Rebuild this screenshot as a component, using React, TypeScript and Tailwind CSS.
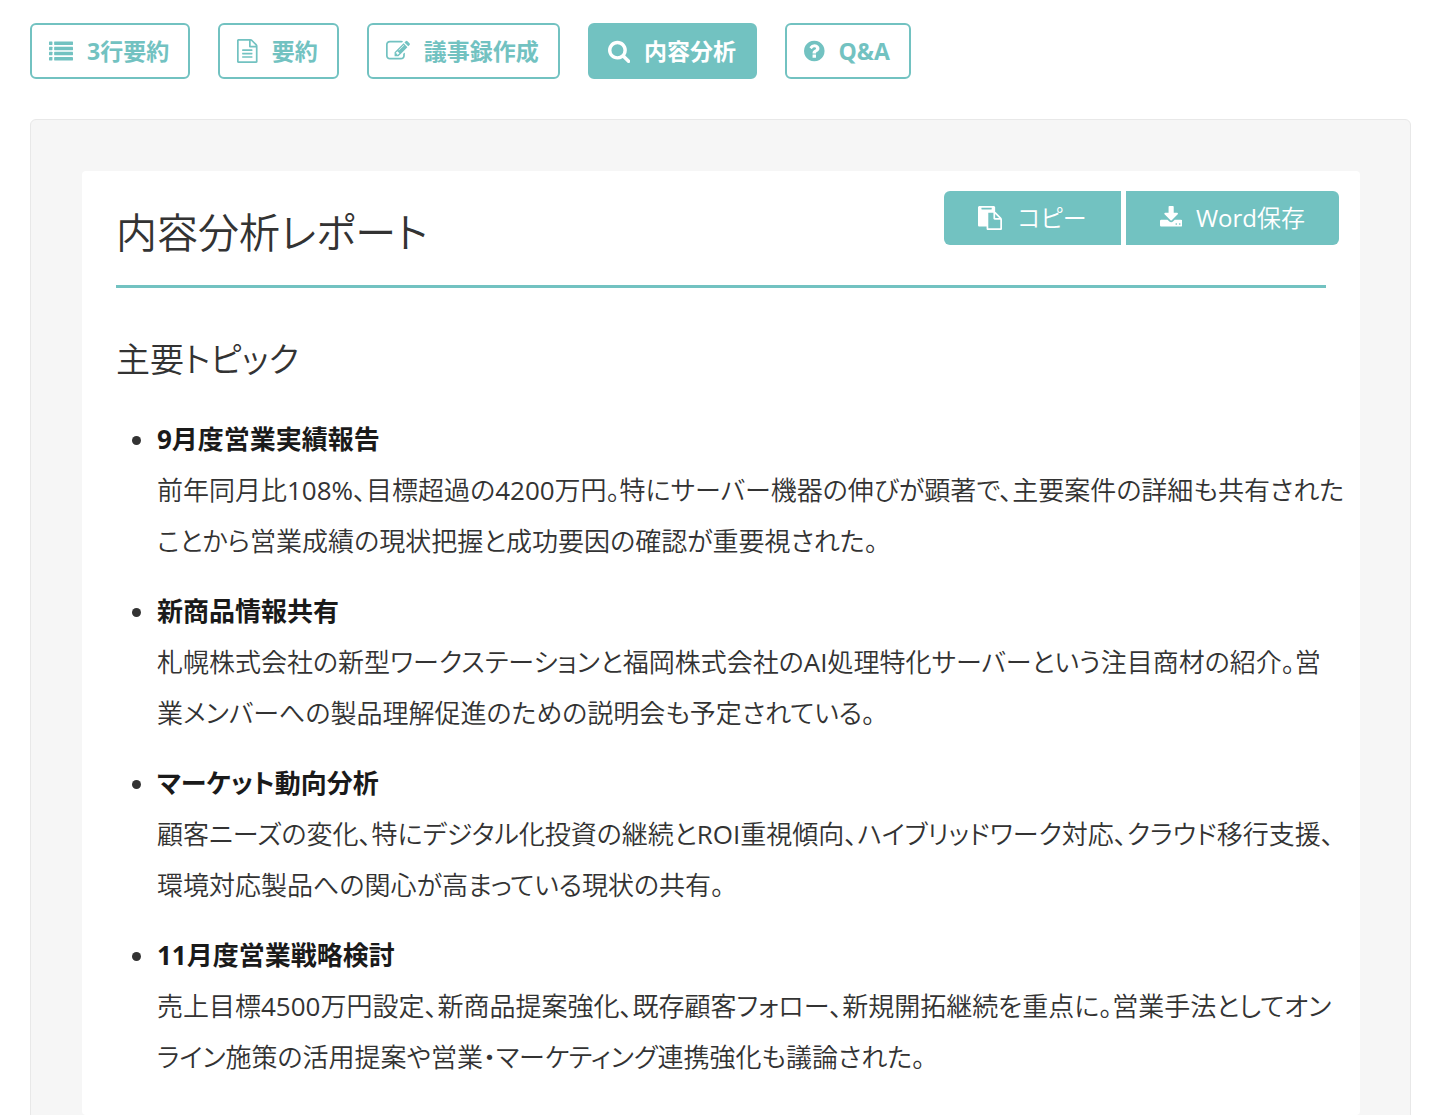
import type { ReactNode } from "react";

type IconProps = { left?: number; width?: number; children: ReactNode };

/* 1792-unit glyph grid drawn at 24px tall; narrower glyphs crop the sides. */
function Glyph({ left = 0, width = 1792, children }: IconProps) {
  return (
    <svg
      aria-hidden="true"
      viewBox={`${left} 0 ${width} 1792`}
      className="h-6 w-auto shrink-0"
      fill="currentColor"
    >
      {children}
    </svg>
  );
}

const listRows = [192, 576, 960, 1344];

const ListIcon = () => (
  <Glyph>
    {listRows.map((y) => (
      <g key={y}>
        <rect x="0" y={y} width="256" height="256" rx="32" />
        <rect x="384" y={y} width="1408" height="256" rx="32" />
      </g>
    ))}
  </Glyph>
);

const FileIcon = () => (
  <Glyph left={128} width={1536}>
    <path d="M1596 380q28 28 48 76t20 88v1152q0 40-28 68t-68 28h-1344q-40 0-68-28t-28-68v-1600q0-40 28-68t68-28h896q40 0 88 20t76 48zm-444-244v376h376q-10-29-22-41l-313-313q-12-12-41-22zm384 1528v-1024h-416q-40 0-68-28t-28-68v-416h-768v1536h1280zm-1024-864q0-14 9-23t23-9h704q14 0 23 9t9 23v64q0 14-9 23t-23 9h-704q-14 0-23-9t-9-23v-64zm736 224q14 0 23 9t9 23v64q0 14-9 23t-23 9h-704q-14 0-23-9t-9-23v-64q0-14 9-23t23-9h704zm0 256q14 0 23 9t9 23v64q0 14-9 23t-23 9h-704q-14 0-23-9t-9-23v-64q0-14 9-23t23-9h704z" />
  </Glyph>
);

const EditIcon = () => (
  <Glyph>
    <path d="M888 1184l116-116-152-152-116 116v56h96v96h56zm440-720q-16-16-33 1l-350 350q-17 17-1 33t33-1l350-350q17-17 1-33zm80 594v190q0 119-84.5 203.5t-203.5 84.5h-832q-119 0-203.5-84.5t-84.5-203.5v-832q0-119 84.5-203.5t203.5-84.5h832q63 0 117 25 15 7 18 23 3 17-9 29l-49 49q-14 14-32 8-23-6-45-6h-832q-66 0-113 47t-47 113v832q0 66 47 113t113 47h832q66 0 113-47t47-113v-126q0-13 9-22l64-64q15-15 35-7t20 29zm-96-738l288 288-672 672h-288v-288zm444 132l-92 92-288-288 92-92q28-28 68-28t68 28l152 152q28 28 28 68t-28 68z" />
  </Glyph>
);

const SearchIcon = () => (
  <Glyph left={64} width={1664}>
    <path d="M1216 832q0-185-131.5-316.5t-316.5-131.5-316.5 131.5-131.5 316.5 131.5 316.5 316.5 131.5 316.5-131.5 131.5-316.5zm512 832q0 52-38 90t-90 38q-54 0-90-38l-343-342q-179 124-399 124-143 0-273.5-55.5t-225-150-150-225-55.5-273.5 55.5-273.5 150-225 225-150 273.5-55.5 273.5 55.5 225 150 150 225 55.5 273.5q0 220-124 399l343 343q37 37 37 90z" />
  </Glyph>
);

const QuestionIcon = () => (
  <Glyph left={128} width={1536}>
    <path d="M1024 1376v-192q0-14-9-23t-23-9h-192q-14 0-23 9t-9 23v192q0 14 9 23t23 9h192q14 0 23-9t9-23zm256-672q0-88-55.5-163t-138.5-116-170-41q-243 0-371 213-15 24 8 42l132 100q7 6 19 6 16 0 25-12 53-68 86-92 34-24 86-24 48 0 85.5 26t37.5 59q0 38-20 61t-68 45q-63 28-115.5 86.5t-52.5 125.5v36q0 14 9 23t23 9h192q14 0 23-9t9-23q0-19 21.5-49.5t54.5-49.5q32-18 49-28.5t46-35 44.5-48 28-60.5 12.5-81zm384 192q0 209-103 385.5t-279.5 279.5-385.5 103-385.5-103-279.5-279.5-103-385.5 103-385.5 279.5-279.5 385.5-103 385.5 103 279.5 279.5 103 385.5z" />
  </Glyph>
);

const PasteIcon = () => (
  <Glyph>
    <path d="M768 1664h896v-640h-416q-40 0-68-28t-28-68v-416h-384v1152zm256-1440v-64q0-13-9.5-22.5t-22.5-9.5h-704q-13 0-22.5 9.5t-9.5 22.5v64q0 13 9.5 22.5t22.5 9.5h704q13 0 22.5-9.5t9.5-22.5zm256 672h299l-299-299v299zm512 128v672q0 40-28 68t-68 28h-960q-40 0-68-28t-28-68v-160h-544q-40 0-68-28t-28-68v-1344q0-40 28-68t68-28h1088q40 0 68 28t28 68v328q21 13 36 28l408 408q28 28 48 76t20 88z" />
  </Glyph>
);

const DownloadIcon = () => (
  <Glyph left={64} width={1664}>
    <path d="M1344 1344q0-26-19-45t-45-19-45 19-19 45 19 45 45 19 45-19 19-45zm256 0q0-26-19-45t-45-19-45 19-19 45 19 45 45 19 45-19 19-45zm128-224v320q0 40-28 68t-68 28h-1472q-40 0-68-28t-28-68v-320q0-40 28-68t68-28h465l135 136q58 56 136 56t136-56l136-136h464q40 0 68 28t28 68zm-325-569q17 41-14 70l-448 448q-18 19-45 19t-45-19l-448-448q-31-29-14-70 17-39 59-39h256v-448q0-26 19-45t45-19h256q26 0 45 19t19 45v448h256q42 0 59 39z" />
  </Glyph>
);

const tabs = [
  { label: "3行要約", icon: <ListIcon /> },
  { label: "要約", icon: <FileIcon /> },
  { label: "議事録作成", icon: <EditIcon /> },
  { label: "内容分析", icon: <SearchIcon />, active: true },
  { label: "Q&A", icon: <QuestionIcon /> },
];

const topics = [
  {
    title: "9月度営業実績報告",
    body: "前年同月比108%、目標超過の4200万円。特にサーバー機器の伸びが顕著で、主要案件の詳細も共有されたことから営業成績の現状把握と成功要因の確認が重要視された。",
  },
  {
    title: "新商品情報共有",
    body: "札幌株式会社の新型ワークステーションと福岡株式会社のAI処理特化サーバーという注目商材の紹介。営業メンバーへの製品理解促進のための説明会も予定されている。",
  },
  {
    title: "マーケット動向分析",
    body: "顧客ニーズの変化、特にデジタル化投資の継続とROI重視傾向、ハイブリッドワーク対応、クラウド移行支援、環境対応製品への関心が高まっている現状の共有。",
  },
  {
    title: "11月度営業戦略検討",
    body: "売上目標4500万円設定、新商品提案強化、既存顧客フォロー、新規開拓継続を重点に。営業手法としてオンライン施策の活用提案や営業・マーケティング連携強化も議論された。",
  },
];

export default function App() {
  return (
    <div
      lang="ja"
      className="h-screen overflow-hidden bg-white pt-[23px] pr-[29px] pl-[30px] font-['Open_Sans','Noto_Sans_CJK_JP_DemiLight','Noto_Sans_CJK_JP',sans-serif] text-[#333] [font-feature-settings:'palt']"
    >
      <nav className="flex flex-wrap gap-7 font-['Open_Sans','Noto_Sans_CJK_JP',sans-serif]">
        {tabs.map((tab) => (
          <button
            key={tab.label}
            type="button"
            aria-pressed={!!tab.active}
            className={
              tab.active
                ? "flex h-14 items-center gap-[14px] rounded-md border-2 border-[#72c2c1] bg-[#72c2c1] pr-[19px] pl-[18px] text-[23px] font-bold text-white"
                : "flex h-14 items-center gap-[14px] rounded-md border-2 border-[#72c2c1] bg-white pr-[19px] pl-[17px] text-[23px] font-bold text-[#72c2c1]"
            }
          >
            {tab.icon}
            {tab.label}
          </button>
        ))}
      </nav>

      <main className="mt-10 rounded-md border border-[#e8e8e8] bg-[#f6f6f6] pt-[51px] pr-[50px] pb-12 pl-[51px]">
        <article className="rounded-sm bg-white px-[34px] pt-5 pb-8">
          <header className="flex items-start justify-between border-b-[3px] border-[#72c2c1] pb-[23px]">
            <h1 className="pt-[11px] text-[41px] leading-[60px]">内容分析レポート</h1>
            <div className="-mr-[13px] flex gap-[5px] text-2xl text-white">
              <button type="button" className="flex h-[54px] items-center gap-4 rounded-l-md bg-[#72c2c1] px-[34px]">
                <PasteIcon />
                コピー
              </button>
              <button type="button" className="flex h-[54px] items-center gap-[14px] rounded-r-md bg-[#72c2c1] px-[34px]">
                <DownloadIcon />
                Word保存
              </button>
            </div>
          </header>

          <h2 className="mt-[45px] text-[34px] leading-[52px]">主要トピック</h2>

          <ul className="mt-7 -mr-[19px] flex list-disc flex-col gap-[18px] pl-[41px] text-[26px] leading-[51px]">
            {topics.map((topic) => (
              <li key={topic.title}>
                <strong className="block font-['Open_Sans','Noto_Sans_CJK_JP',sans-serif] leading-[52px] font-bold text-[#1a1a1a]">
                  {topic.title}
                </strong>
                <p>{topic.body}</p>
              </li>
            ))}
          </ul>
        </article>
      </main>
    </div>
  );
}
